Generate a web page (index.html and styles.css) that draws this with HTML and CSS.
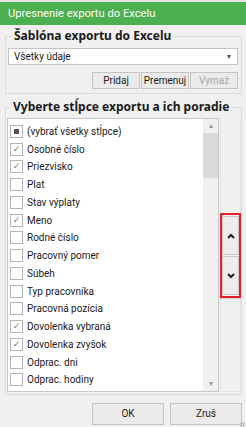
FILE: index.html
```html
<!DOCTYPE html>
<html lang="sk">
<head>
  <meta charset="UTF-8" />
  <title>Upresnenie exportu do Excelu</title>
  <link rel="stylesheet" href="styles.css">
</head>
<body>

<div class="top-edge"></div>
<div class="titlebar">Upresnenie exportu do Excelu</div>

<fieldset class="group">
  <legend>Šablóna exportu do Excelu</legend>
  <div class="combo">
    <span>Všetky údaje</span>
    <span class="combo-arrow">&#9662;</span>
  </div>
  <div class="btn-row">
    <button class="btn">Pridaj</button>
    <button class="btn">Premenuj</button>
    <button class="btn disabled">Vymaž</button>
  </div>
</fieldset>

<fieldset class="group group-columns">
  <legend>Vyberte stĺpce exportu a ich poradie</legend>
  <div class="columns-body">
    <div class="listbox">
      <div class="items">
        <div class="item"><span class="check partial"></span>(vybrať všetky stĺpce)</div>
        <div class="item"><span class="check on"></span>Osobné číslo</div>
        <div class="item"><span class="check on"></span>Priezvisko</div>
        <div class="item"><span class="check"></span>Plat</div>
        <div class="item"><span class="check"></span>Stav výplaty</div>
        <div class="item"><span class="check on"></span>Meno</div>
        <div class="item"><span class="check"></span>Rodné číslo</div>
        <div class="item"><span class="check"></span>Pracovný pomer</div>
        <div class="item"><span class="check"></span>Súbeh</div>
        <div class="item"><span class="check"></span>Typ pracovníka</div>
        <div class="item"><span class="check"></span>Pracovná pozícia</div>
        <div class="item"><span class="check on"></span>Dovolenka vybraná</div>
        <div class="item"><span class="check on"></span>Dovolenka zvyšok</div>
        <div class="item"><span class="check"></span>Odprac. dni</div>
        <div class="item"><span class="check"></span>Odprac. hodiny</div>
        <div class="item"><span class="check"></span></div>
      </div>
      <div class="scrollbar">
        <span class="sb-arrow">&#9652;</span>
        <div class="sb-thumb"></div>
        <div class="sb-track"></div>
        <span class="sb-arrow">&#9662;</span>
      </div>
    </div>
    <div class="move-col">
      <div class="move-pad"></div>
      <div class="move-box">
        <button class="move-btn">
          <svg width="8" height="6" viewBox="0 0 8 6"><polyline points="1,5 4,2 7,5" fill="none" stroke="#222" stroke-width="2"/></svg>
        </button>
        <button class="move-btn">
          <svg width="8" height="6" viewBox="0 0 8 6"><polyline points="1,1 4,4 7,1" fill="none" stroke="#222" stroke-width="2"/></svg>
        </button>
      </div>
      <div class="move-pad rest"></div>
    </div>
  </div>
</fieldset>

<div class="footer">
  <button class="btn big">OK</button>
  <button class="btn big">Zruš</button>
</div>
<div class="grip"></div>

</body>
</html>
```

FILE: styles.css
```css
body {
  margin: 0;
  width: 246px;
  height: 427px;
  overflow: hidden;
  background: #f0f0f0;
  font-family: Roboto, 'Noto Sans', sans-serif;
  font-size: 10px;
  color: #1a1a1a;
  position: relative;
}
.top-edge {
  height: 2px;
  background: #e4e4e4;
}
.titlebar {
  height: 23px;
  line-height: 23px;
  padding-left: 8px;
  background: #4caf50;
  color: #fff;
  font-size: 11.2px;
}
.group {
  margin: 3px 4px 0 5px;
  padding: 4px 3px 4px 2px;
  border: 1px solid #dcdcdc;
  min-width: 0;
}
.group legend {
  font-family: 'Noto Sans', sans-serif;
  font-weight: bold;
  font-size: 12px;
  padding: 0 2px;
  margin-left: 4px;
  line-height: 16px;
}
.combo {
  display: flex;
  justify-content: space-between;
  align-items: center;
  height: 15px;
  padding: 0 6px 0 5px;
  background: #fff;
  border: 1px solid #c4c4c4;
}
.combo-arrow {
  font-size: 8px;
  color: #555;
}
.btn-row {
  display: flex;
  justify-content: flex-end;
  gap: 1px;
  margin-top: 7px;
}
.btn {
  font-family: Roboto, 'Noto Sans', sans-serif;
  font-size: 10px;
  color: #1a1a1a;
  background: #ebebeb;
  border: 1px solid #c4c4c4;
  width: 48px;
  height: 17px;
  padding: 0;
  line-height: 14px;
}
.btn.disabled {
  color: #a6a6a6;
}
.group-columns {
  margin-top: 5px;
  padding: 3px 0 2px 1px;
}
.columns-body {
  display: flex;
  gap: 1px;
}
.listbox {
  display: flex;
  width: 210px;
  height: 272px;
  background: #fff;
  border: 1px solid #c8c8c8;
  overflow: hidden;
}
.items {
  flex: 1;
  padding-top: 3.5px;
}
.item {
  display: flex;
  align-items: center;
  gap: 4px;
  height: 17.75px;
  padding-left: 2px;
  white-space: nowrap;
}
.check {
  box-sizing: border-box;
  width: 13px;
  height: 13px;
  border: 1px solid #b4b4b4;
  background: #fff;
  display: flex;
  align-items: center;
  justify-content: center;
  flex-shrink: 0;
}
.check.on::after {
  content: "\2713";
  font-family: 'DejaVu Sans', sans-serif;
  font-size: 9px;
  color: #7a7a7a;
  line-height: 1;
}
.check.partial::after {
  content: "";
  width: 5px;
  height: 5px;
  background: #555;
}
.scrollbar {
  width: 15px;
  display: flex;
  flex-direction: column;
  background: #f0f0f0;
  align-items: center;
}
.sb-arrow {
  font-size: 8px;
  color: #9a9a9a;
  height: 14px;
  line-height: 14px;
}
.sb-thumb {
  width: 100%;
  height: 45px;
  background: #dadada;
}
.sb-track {
  flex: 1;
}
.move-col {
  width: 21px;
  display: flex;
  flex-direction: column;
}
.move-pad {
  height: 95px;
  border: 1px solid #e4e4e4;
  border-bottom: none;
  border-top: none;
}
.move-pad.rest {
  flex: 1;
  border-top: 1px solid #d6d6d6;
  border-bottom: 1px solid #e4e4e4;
}
.move-box {
  display: flex;
  flex-direction: column;
  gap: 1px;
  border: 2px solid #e3202b;
  padding: 1px 0;
}
.move-btn {
  height: 39px;
  padding: 0;
  background: #ececec;
  border: 1px solid #c8c8c8;
  display: flex;
  align-items: center;
  justify-content: center;
}
.footer {
  display: flex;
  justify-content: flex-end;
  gap: 6px;
  margin: 8px 4px 0 0;
}
.btn.big {
  width: 72px;
  height: 22px;
}
.grip {
  position: absolute;
  right: 1px;
  bottom: 0;
  width: 5px;
  height: 5px;
  background: radial-gradient(circle, #b0b0b0 0.8px, transparent 1px) 0 0 / 2.5px 2.5px;
}
```
